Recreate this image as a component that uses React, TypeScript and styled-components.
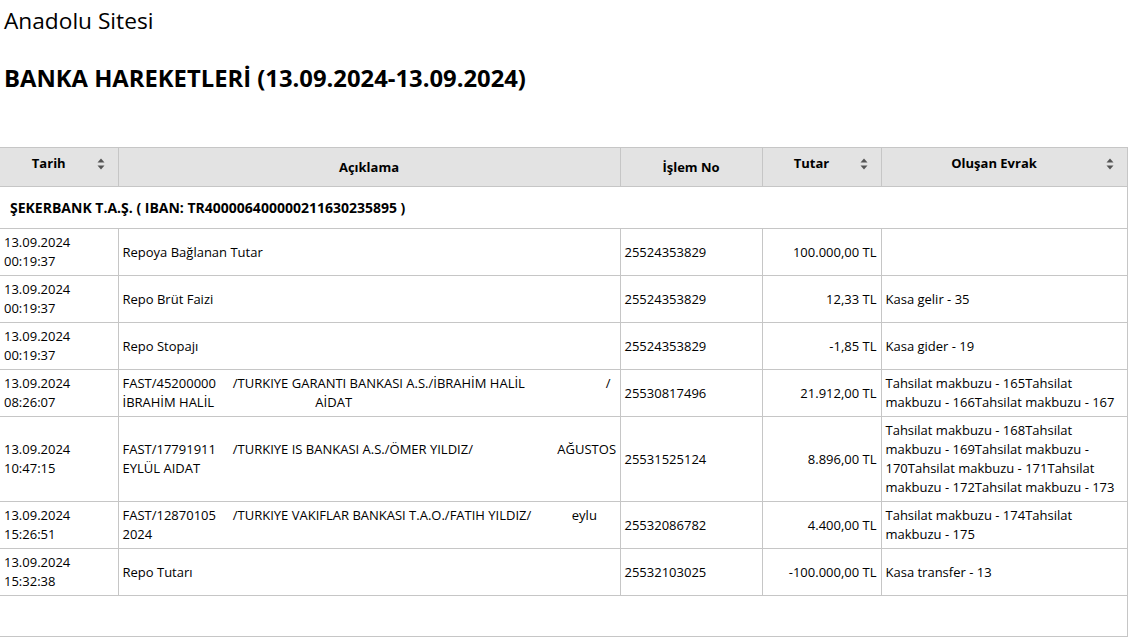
import { FC } from "react";
import styled, { createGlobalStyle } from "styled-components";

interface IRow {
  date: string;
  time: string;
  desc: string[];
  no: string;
  amount: string;
  doc: string;
}

const sp = (n: number): string => " ".repeat(n);

const rows: IRow[] = [
  { date: "13.09.2024", time: "00:19:37", desc: ["Repoya Bağlanan Tutar"], no: "25524353829", amount: "100.000,00 TL", doc: "" },
  { date: "13.09.2024", time: "00:19:37", desc: ["Repo Brüt Faizi"], no: "25524353829", amount: "12,33 TL", doc: "Kasa gelir - 35" },
  { date: "13.09.2024", time: "00:19:37", desc: ["Repo Stopajı"], no: "25524353829", amount: "-1,85 TL", doc: "Kasa gider - 19" },
  {
    date: "13.09.2024",
    time: "08:26:07",
    desc: [
      "FAST/45200000" + sp(5) + "/TURKIYE GARANTI BANKASI A.S./İBRAHİM HALİL" + sp(24) + "/",
      "İBRAHİM HALİL" + sp(30) + "AİDAT",
    ],
    no: "25530817496",
    amount: "21.912,00 TL",
    doc: "Tahsilat makbuzu - 165Tahsilat makbuzu - 166Tahsilat makbuzu - 167",
  },
  {
    date: "13.09.2024",
    time: "10:47:15",
    desc: ["FAST/17791911" + sp(5) + "/TURKIYE IS BANKASI A.S./ÖMER YILDIZ/" + sp(25) + "AĞUSTOS", "EYLÜL AIDAT"],
    no: "25531525124",
    amount: "8.896,00 TL",
    doc: "Tahsilat makbuzu - 168Tahsilat makbuzu - 169Tahsilat makbuzu - 170Tahsilat makbuzu - 171Tahsilat makbuzu - 172Tahsilat makbuzu - 173",
  },
  {
    date: "13.09.2024",
    time: "15:26:51",
    desc: ["FAST/12870105" + sp(5) + "/TURKIYE VAKIFLAR BANKASI T.A.O./FATIH YILDIZ/" + sp(12) + "eylu", "2024"],
    no: "25532086782",
    amount: "4.400,00 TL",
    doc: "Tahsilat makbuzu - 174Tahsilat makbuzu - 175",
  },
  { date: "13.09.2024", time: "15:32:38", desc: ["Repo Tutarı"], no: "25532103025", amount: "-100.000,00 TL", doc: "Kasa transfer - 13" },
];

const GlobalStyle = createGlobalStyle`
  body {
    margin: 0;
    font-family: "Open Sans", "Noto Sans", sans-serif;
    color: #000;
    background: #fff;
  }
`;

const SortIcon: FC = () => (
  <StyledSort viewBox="0 0 10 14" width="10" height="14">
    <path d="M1.5 5.5 L5 1.5 L8.5 5.5 Z" fill="#555" />
    <path d="M1.5 8.5 L5 12.5 L8.5 8.5 Z" fill="#555" />
  </StyledSort>
);

const App: FC = () => {
  const renderRows = (): JSX.Element[] => {
    return rows.map((r) => (
      <tr key={r.no + r.amount}>
        <StyledCell>
          {r.date}
          <br />
          {r.time}
        </StyledCell>
        <StyledCell>
          <StyledDesc>
            {r.desc.map((d, i) => (
              <span key={i}>{d}</span>
            ))}
          </StyledDesc>
        </StyledCell>
        <StyledCell>{r.no}</StyledCell>
        <StyledCell $align="right">{r.amount}</StyledCell>
        <StyledCell>{r.doc}</StyledCell>
      </tr>
    ));
  };

  return (
    <>
      <GlobalStyle />
      <StyledPage>
        <StyledSite>Anadolu Sitesi</StyledSite>
        <StyledTitle>BANKA HAREKETLERİ (13.09.2024-13.09.2024)</StyledTitle>
      </StyledPage>
      <StyledTable>
        <colgroup>
          <col style={{ width: 118 }} />
          <col style={{ width: 502 }} />
          <col style={{ width: 142 }} />
          <col style={{ width: 119 }} />
          <col style={{ width: 246 }} />
        </colgroup>
        <thead>
          <tr>
            <StyledHead $sortable>
              Tarih
              <SortIcon />
            </StyledHead>
            <StyledHead>Açıklama</StyledHead>
            <StyledHead>İşlem No</StyledHead>
            <StyledHead $sortable>
              Tutar
              <SortIcon />
            </StyledHead>
            <StyledHead $sortable>
              Oluşan Evrak
              <SortIcon />
            </StyledHead>
          </tr>
        </thead>
        <tbody>
          <tr>
            <StyledGroup colSpan={5}>ŞEKERBANK T.A.Ş. ( IBAN: TR400006400000211630235895 )</StyledGroup>
          </tr>
          {renderRows()}
          <tr>
            <StyledFooter colSpan={5} />
          </tr>
        </tbody>
      </StyledTable>
    </>
  );
};

const StyledPage = styled.div`
  padding: 6px 4px 0;
`;

const StyledSite = styled.div`
  font-size: 22.7px;
  line-height: 30px;
`;

const StyledTitle = styled.h1`
  font-size: 23.8px;
  font-weight: 700;
  margin: 27px 0 0;
  line-height: 30px;
  height: 84px;
`;

const StyledTable = styled.table`
  border-collapse: collapse;
  table-layout: fixed;
  width: 1127px;
  font-size: 13px;
  line-height: 19px;
  border: 1px solid #c6c6c6;
  border-left: none;
`;

const StyledHead = styled.th<{ $sortable?: boolean }>`
  position: relative;
  background: #e3e3e3;
  border: 1px solid #c6c6c6;
  padding: ${(p) => (p.$sortable ? "6px 24px 13px 4px" : "10px 4px 9px")};
  vertical-align: ${(p) => (p.$sortable ? "top" : "middle")};
  font-weight: 700;
  text-align: center;
  &:first-child {
    border-left: none;
  }
`;

const StyledSort = styled.svg`
  position: absolute;
  right: 12px;
  top: 9px;
`;

const StyledGroup = styled.td`
  padding: 11px 10px;
  font-size: 14px;
  font-weight: 700;
  border: 1px solid #c6c6c6;
  border-left: none;
`;

const StyledCell = styled.td<{ $align?: string }>`
  border: 1px solid #c6c6c6;
  padding: 4px;
  vertical-align: middle;
  text-align: ${(p) => p.$align || "left"};
  &:first-child {
    border-left: none;
  }
`;

const StyledDesc = styled.div`
  display: flex;
  flex-direction: column;
  & > span {
    white-space: pre;
  }
`;

const StyledFooter = styled.td`
  height: 40px;
  padding: 0;
  border: 1px solid #c6c6c6;
  border-left: none;
`;

export default App;
